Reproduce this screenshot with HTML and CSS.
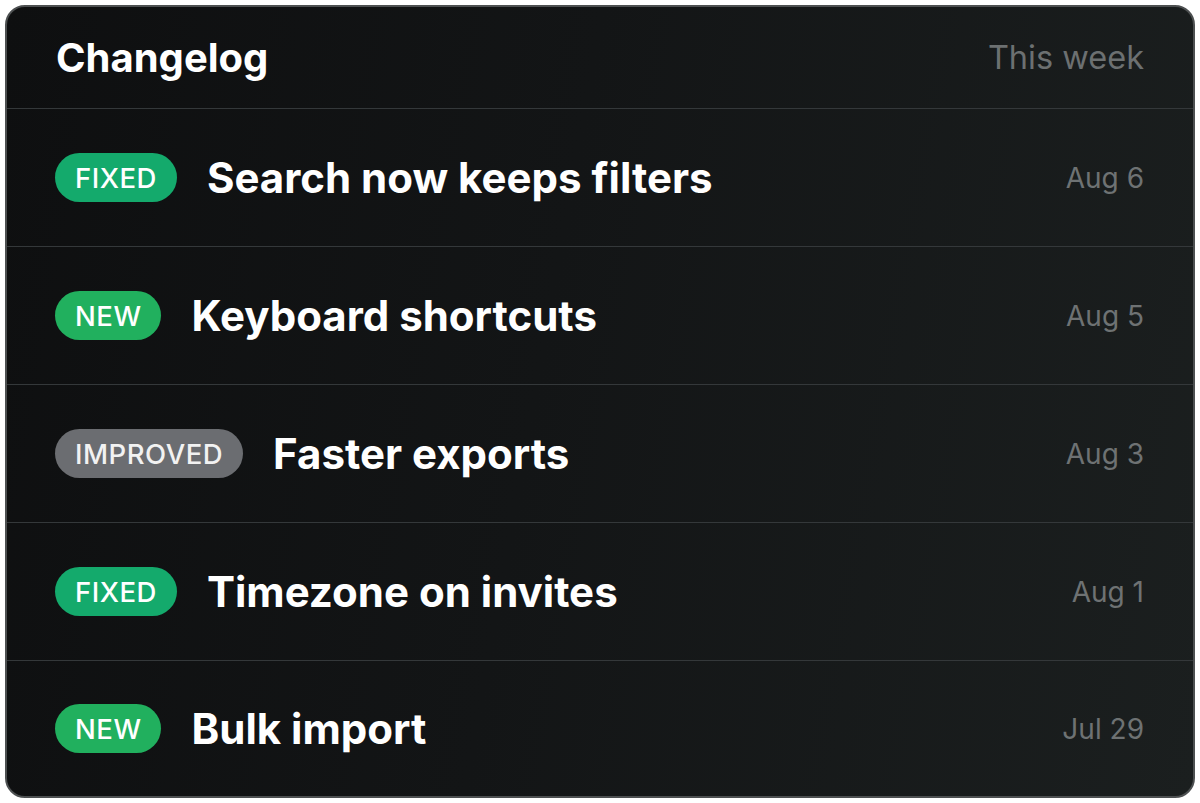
FILE: index.html
```html
<!DOCTYPE html>
<html lang="en">
<head>
<meta charset="utf-8">
<title>Changelog</title>
<link rel="stylesheet" href="styles.css">
</head>
<body>
<section class="card">
  <header class="head">
    <h1 class="title">Changelog</h1>
    <span class="period">This week</span>
  </header>
  <ul class="list">
    <li class="row"><span class="badge fixed">FIXED</span><span class="name">Search now keeps filters</span><span class="date">Aug 6</span></li>
    <li class="row"><span class="badge new">NEW</span><span class="name">Keyboard shortcuts</span><span class="date">Aug 5</span></li>
    <li class="row"><span class="badge improved">IMPROVED</span><span class="name">Faster exports</span><span class="date">Aug 3</span></li>
    <li class="row"><span class="badge fixed">FIXED</span><span class="name">Timezone on invites</span><span class="date">Aug 1</span></li>
    <li class="row"><span class="badge new">NEW</span><span class="name">Bulk import</span><span class="date">Jul 29</span></li>
  </ul>
</section>
</body>
</html>
```
FILE: styles.css
```css
* { box-sizing: border-box; }
html, body { margin: 0; padding: 0; background: #ffffff; }
body {
  padding: 5px;
  font-family: Inter, "Noto Sans", "Liberation Sans", sans-serif;
}
.card {
  width: 1190px;
  height: 793px;
  border: 2px solid #4d5051;
  border-radius: 20px;
  background: linear-gradient(100deg, #0e0f10 0%, #131516 45%, #1b1f1f 100%);
  overflow: hidden;
  display: flex;
  flex-direction: column;
}
.head {
  height: 102px;
  flex: none;
  display: flex;
  align-items: center;
  justify-content: space-between;
  padding: 0 49px 0 49px;
  border-bottom: 1px solid #34383a;
}
.title {
  margin: 0;
  color: #ffffff;
  font-size: 40px;
  font-weight: 700;
}
.period {
  color: #6c7071;
  font-size: 32.5px;
  font-weight: 400;
}
.list {
  list-style: none;
  margin: 0;
  padding: 0;
  flex: 1;
  display: flex;
  flex-direction: column;
}
.row {
  height: 138px;
  flex: none;
  display: flex;
  align-items: center;
  padding: 0 49px 0 48px;
  border-bottom: 1px solid #34383a;
}
.row:last-child { border-bottom: none; flex: 1; }
.badge {
  height: 49px;
  display: inline-flex;
  align-items: center;
  padding: 0 20px;
  border-radius: 25px;
  color: #ffffff;
  font-size: 27.5px;
  font-weight: 500;
  letter-spacing: 0.5px;
  margin-right: 30px;
}
.fixed { background: #14aa6c; }
.new { background: #21b05e; }
.improved { background: #6b6d71; color: #f2f2f2; }
.name {
  color: #ffffff;
  font-size: 42px;
  font-weight: 700;
  flex: 1;
}
.date {
  color: #6e7273;
  font-size: 28px;
  font-weight: 400;
}
```
